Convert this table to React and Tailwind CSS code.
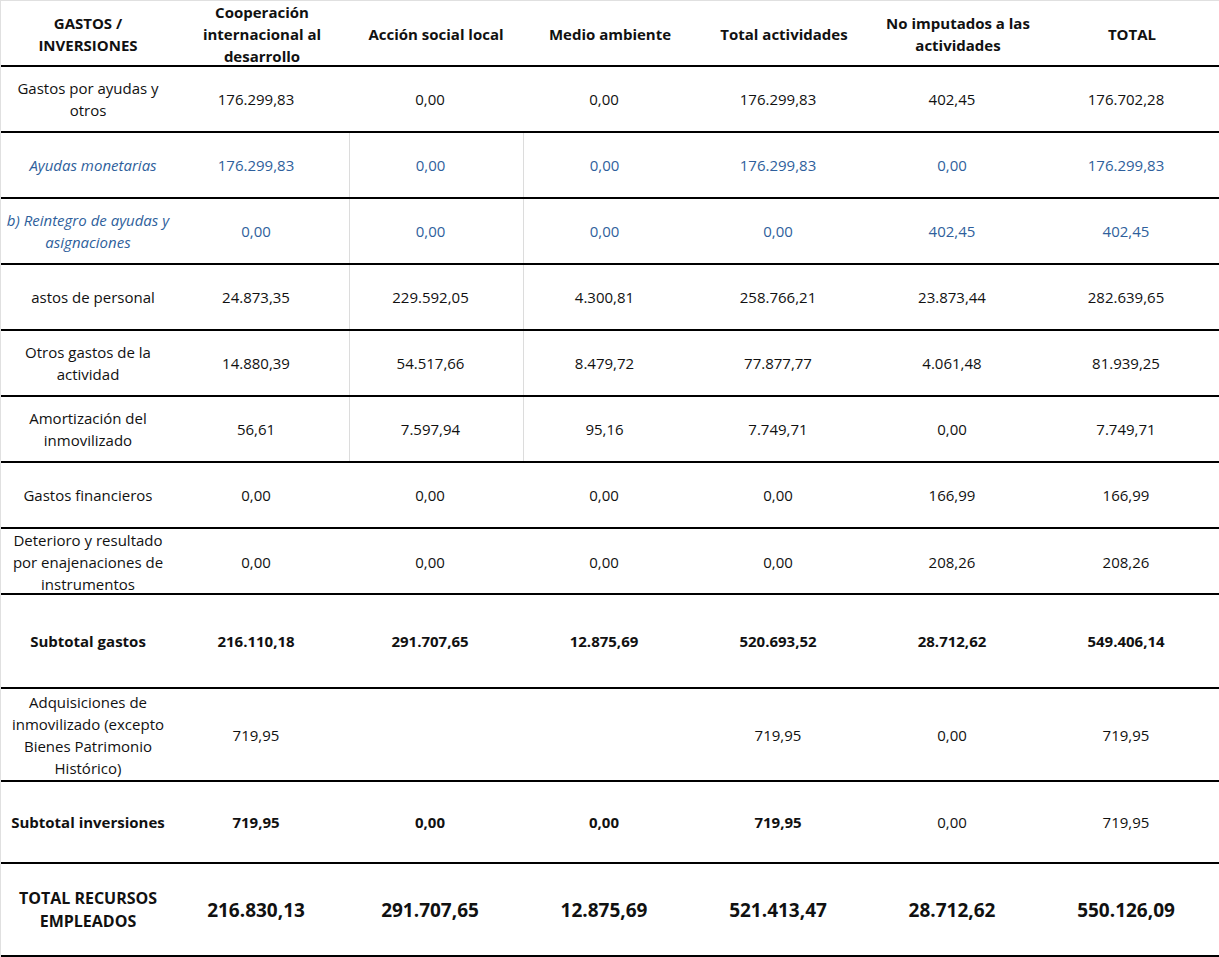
import React from "react";

// --- Table data ---
const HEADERS = [
  "GASTOS / INVERSIONES",
  "Cooperación internacional al desarrollo",
  "Acción social local",
  "Medio ambiente",
  "Total actividades",
  "No imputados a las actividades",
  "TOTAL",
];

const ROWS = [
  { label: "Gastos por ayudas y otros", values: ["176.299,83", "0,00", "0,00", "176.299,83", "402,45", "176.702,28"], h: "h-[66px]" },
  { label: "Ayudas monetarias", values: ["176.299,83", "0,00", "0,00", "176.299,83", "0,00", "176.299,83"], h: "h-[66px]", blue: true, grid: true, shift: "pl-[15px]" },
  { label: "b) Reintegro de ayudas y asignaciones", values: ["0,00", "0,00", "0,00", "0,00", "402,45", "402,45"], h: "h-[66px]", blue: true, grid: true },
  { label: "astos de personal", values: ["24.873,35", "229.592,05", "4.300,81", "258.766,21", "23.873,44", "282.639,65"], h: "h-[66px]", grid: true, shift: "pl-[15px]" },
  { label: "Otros gastos de la actividad", values: ["14.880,39", "54.517,66", "8.479,72", "77.877,77", "4.061,48", "81.939,25"], h: "h-[66px]", grid: true },
  { label: "Amortización del inmovilizado", values: ["56,61", "7.597,94", "95,16", "7.749,71", "0,00", "7.749,71"], h: "h-[66px]", grid: true },
  { label: "Gastos financieros", values: ["0,00", "0,00", "0,00", "0,00", "166,99", "166,99"], h: "h-[66px]" },
  { label: "Deterioro y resultado por enajenaciones de instrumentos", values: ["0,00", "0,00", "0,00", "0,00", "208,26", "208,26"], h: "h-[66px]" },
  { label: "Subtotal gastos", values: ["216.110,18", "291.707,65", "12.875,69", "520.693,52", "28.712,62", "549.406,14"], h: "h-[94px]", bold: [0, 1, 2, 3, 4, 5, 6] },
  { label: "Adquisiciones de inmovilizado (excepto Bienes Patrimonio Histórico)", values: ["719,95", "", "", "719,95", "0,00", "719,95"], h: "h-[93px]" },
  { label: "Subtotal inversiones", values: ["719,95", "0,00", "0,00", "719,95", "0,00", "719,95"], h: "h-[82px]", bold: [0, 1, 2, 3, 4] },
];

const TOTAL = ["216.830,13", "291.707,65", "12.875,69", "521.413,47", "28.712,62", "550.126,09"];

const Cell = ({ children, className = "" }) => (
  <div className={`flex items-center justify-center text-center ${className}`}>
    <span>{children}</span>
  </div>
);

const App = () => {
  return (
    <div className="w-[1219px] bg-white font-['Open_Sans',sans-serif] text-[15px] leading-[22px] text-[#111] border-l border-[#e0e0e0]">
      {/* --- Header --- */}
      <div className="grid grid-cols-7 h-[67px] pb-[2px] border-t border-[#e0e0e0] border-b-2 border-b-black font-bold">
        {HEADERS.map((h) => (
          <Cell key={h} className="px-[5px]">{h}</Cell>
        ))}
      </div>

      {/* --- Body rows --- */}
      {ROWS.map((row) => (
        <div key={row.label} className={`grid grid-cols-7 ${row.h} border-b-2 border-black ${row.blue ? "text-[#2f5f9c]" : ""}`}>
          <Cell className={`px-[5px] ${row.shift || ""} ${row.blue ? "italic" : ""} ${row.bold?.includes(0) ? "font-bold" : ""}`}>
            {row.label}
          </Cell>
          {row.values.map((v, i) => (
            <Cell
              key={i}
              className={`pl-[5px] pr-[17px] ${row.bold?.includes(i + 1) ? "font-bold" : ""} ${row.grid && (i === 1 || i === 2) ? "border-l border-[#dcdcdc]" : ""}`}
            >
              {v}
            </Cell>
          ))}
        </div>
      ))}

      {/* --- Total --- */}
      <div className="grid grid-cols-7 h-[93px] border-b-2 border-black font-bold">
        <Cell className="px-[5px] text-[16px] leading-[23px]">TOTAL RECURSOS EMPLEADOS</Cell>
        {TOTAL.map((v, i) => (
          <Cell key={i} className="pl-[5px] pr-[17px] text-[19px]">{v}</Cell>
        ))}
      </div>
    </div>
  );
};

export default App;
